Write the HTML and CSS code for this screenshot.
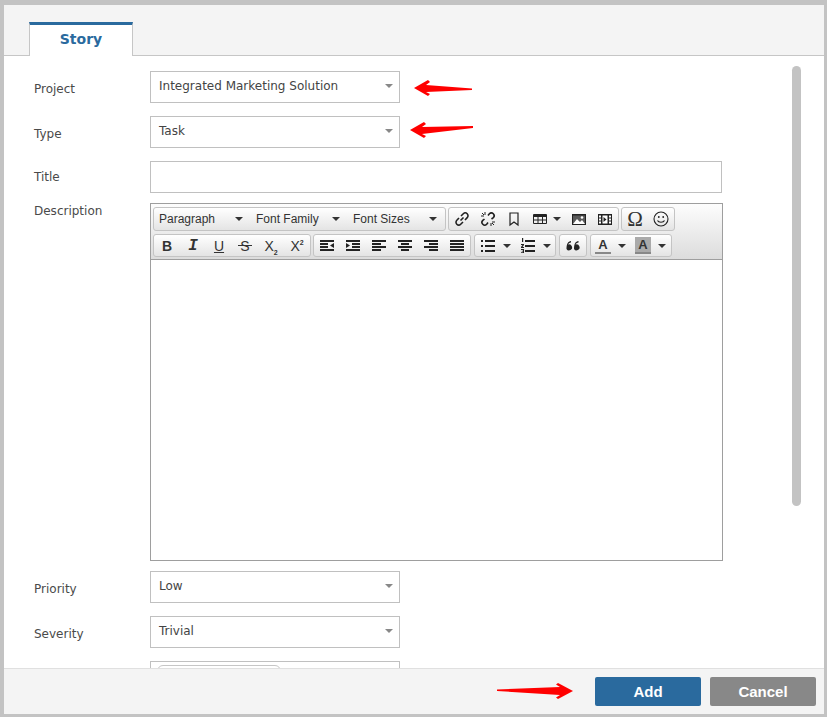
FILE: index.html
```html
<!DOCTYPE html>
<html lang="en">
<head>
<meta charset="utf-8">
<title>Story</title>
<link rel="stylesheet" href="styles.css">
</head>
<body>
<svg class="defs" width="0" height="0" aria-hidden="true">
  <defs>
    <symbol id="caret" viewBox="0 0 8 4"><path d="M0 0h8L4 4z" fill="currentColor"/></symbol>
  </defs>
</svg>
<div class="window">
  <header class="tabbar"><div class="tab">Story</div></header>
  <main class="content">
    <form class="form">
      <div class="row r-select"><label class="lbl">Project</label><div class="select"><span>Integrated Marketing Solution</span><i class="sel-caret"></i></div></div>
      <div class="row r-select"><label class="lbl">Type</label><div class="select"><span>Task</span><i class="sel-caret"></i></div></div>
      <div class="row r-title"><label class="lbl">Title</label><div class="input"></div></div>
      <div class="row r-desc"><label class="lbl">Description</label>
        <div class="editor">
          <div class="toolbar">
            <div class="tb-line">
              <div class="group">
                <div class="menu">Paragraph<svg class="car"><use href="#caret"/></svg></div>
                <div class="menu">Font Family<svg class="car"><use href="#caret"/></svg></div>
                <div class="menu">Font Sizes<svg class="car"><use href="#caret"/></svg></div>
              </div>
              <div class="group">
                <div class="btn"><svg width="16" height="16" viewBox="0 0 16 16" fill="none" stroke="#222" stroke-width="1.6"><path d="M6.500 9.500l3-3"/><path d="M7 5l2.300-2.300a2.300 2.300 0 0 1 3.900 3.900L11 9"/><path d="M5 7L2.800 9.300a2.300 2.300 0 0 0 3.900 3.900L9 11"/></svg></div>
                <div class="btn"><svg width="16" height="16" viewBox="0 0 16 16" fill="none" stroke="#222" stroke-width="1.600"><path d="M8 4.500l1.400-1.800a2.300 2.300 0 0 1 3.900 3.900L11.500 8"/><path d="M4.500 8L2.800 9.400a2.300 2.300 0 0 0 3.900 3.900L8 11.500"/><path stroke-width="1" d="M5 1v3M1 5h3M11 15v-3M15 11h-3M2 2l2 2M14 14l-2-2"/></svg></div>
                <div class="btn"><svg width="16" height="16" viewBox="0 0 16 16" fill="none" stroke="#222" stroke-width="1.200"><path d="M4 2h8v12l-4-3-4 3z"/></svg></div>
                <div class="btn wide w39"><svg width="16" height="16" viewBox="0 0 16 16" fill="none" stroke="#222"><path d="M1.500 3.500h13v9h-13z"/><path d="M1.500 5h13" stroke-width="2"/><path d="M1.500 9h13M6 4v8M10.500 4v8"/></svg><svg class="car"><use href="#caret"/></svg></div>
                <div class="btn"><svg width="16" height="16" viewBox="0 0 16 16"><path d="M1 3h14v11H1z" fill="#222"/><path d="M2 4.500h12v8.500H2z" fill="#fff" opacity=".25"/><path d="M2 13l4-5 3 3 2-2 3 4z" fill="#fff"/><circle cx="11" cy="6.500" r="1.300" fill="#fff"/></svg></div>
                <div class="btn"><svg width="16" height="16" viewBox="0 0 16 16"><path fill="#222" d="M1 3h14v11H1z"/><path fill="#fff" d="M2 4.500h2v2H2zM2 7.500h2v2H2zM2 10.500h2v2H2zM12 4.500h2v2h-2zM12 7.500h2v2h-2zM12 10.500h2v2h-2zM5.500 4.500h5v8h-5z"/><path fill="#222" d="M6.500 6l3 2.500-3 2.500z"/></svg></div>
              </div>
              <div class="group">
                <div class="btn omega">&#937;</div>
                <div class="btn"><svg width="16" height="16" viewBox="0 0 16 16" fill="none" stroke="#222" stroke-width="1.100"><circle cx="8" cy="8" r="7"/><path d="M4.500 9.500c1 2.400 6 2.400 7 0" /><circle cx="5.800" cy="6" r=".9" fill="#222" stroke="none"/><circle cx="10.200" cy="6" r=".9" fill="#222" stroke="none"/></svg></div>
              </div>
            </div>
            <div class="tb-line tb-second">
              <div class="group">
                <div class="btn glyph bold">B</div>
                <div class="btn glyph ital">I</div>
                <div class="btn glyph under">U</div>
                <div class="btn glyph strike">S</div>
                <div class="btn glyph"><span>X<sub>2</sub></span></div>
                <div class="btn glyph"><span>X<sup>2</sup></span></div>
              </div>
              <div class="group">
                <div class="btn"><svg width="16" height="16" viewBox="0 0 16 16" fill="#222"><path d="M1 2h14v2H1zM1 5h8v2H1zM1 8h8v2H1zM1 11h14v2H1zM15 5v5l-4-2.500z"/></svg></div>
                <div class="btn"><svg width="16" height="16" viewBox="0 0 16 16" fill="#222"><path d="M1 2h14v2H1zM7 5h8v2H7zM7 8h8v2H7zM1 11h14v2H1zM1 5v5l4-2.500z"/></svg></div>
                <div class="btn"><svg width="16" height="16" viewBox="0 0 16 16" fill="#222"><path d="M1 2h14v2H1zM1 5h9v2H1zM1 8h14v2H1zM1 11h9v2H1z"/></svg></div>
                <div class="btn"><svg width="16" height="16" viewBox="0 0 16 16" fill="#222"><path d="M1 2h14v2H1zM4 5h8v2H4zM1 8h14v2H1zM4 11h8v2H4z"/></svg></div>
                <div class="btn"><svg width="16" height="16" viewBox="0 0 16 16" fill="#222"><path d="M1 2h14v2H1zM6 5h9v2H6zM1 8h14v2H1zM6 11h9v2H6z"/></svg></div>
                <div class="btn"><svg width="16" height="16" viewBox="0 0 16 16" fill="#222"><path d="M1 2h14v2H1zM1 5h14v2H1zM1 8h14v2H1zM1 11h14v2H1z"/></svg></div>
              </div>
              <div class="group g-gap">
                <div class="btn wide list"><svg width="16" height="16" viewBox="0 0 16 16" fill="#222"><path d="M5 2h10v2H5zM5 7h10v2H5zM5 12h10v2H5zM1 2h2v2H1zM1 7h2v2H1zM1 12h2v2H1z"/></svg><svg class="car"><use href="#caret"/></svg></div>
                <div class="btn wide list"><svg width="16" height="16" viewBox="0 0 16 16" fill="#222"><path d="M5 2h10v2H5zM5 7h10v2H5zM5 12h10v2H5zM2 0h1.200v4H2zM1 6h3v1L2.500 9H4v1H1V9l1.500-2H1zM1 11h3v4H1v-.800h2v-.800H1.800v-.700H3v-.700H1z"/></svg><svg class="car"><use href="#caret"/></svg></div>
              </div>
              <div class="group g-gap">
                <div class="btn"><svg width="16" height="16" viewBox="0 0 16 16" fill="#222"><path d="M1.500 11a3 3 0 1 0 1.600-4.400C3.500 5.400 4.500 4.700 6 4.500V3C3 3.300 1.500 6 1.500 11zM9 11a3 3 0 1 0 1.600-4.400c.4-1.200 1.400-1.900 2.900-2.100V3C10.500 3.300 9 6 9 11z"/></svg></div>
              </div>
              <div class="group g-gap">
                <div class="btn wide colour"><span class="swatch">A</span><svg class="car"><use href="#caret"/></svg></div>
                <div class="btn wide colour"><span class="swatch shade">A</span><svg class="car"><use href="#caret"/></svg></div>
              </div>
            </div>
          </div>
          <div class="edit-area"></div>
        </div>
      </div>
      <div class="row r-select"><label class="lbl">Priority</label><div class="select"><span>Low</span><i class="sel-caret"></i></div></div>
      <div class="row r-select"><label class="lbl">Severity</label><div class="select"><span>Trivial</span><i class="sel-caret"></i></div></div>
      <div class="row"><div class="lbl"></div><div class="tags"><div class="chip"></div></div></div>
    </form>
    <div class="scrollbar"></div>
    <svg class="arrow a1" width="66" height="24" viewBox="0 0 66 24"><path d="M4 12L18 4l2 2-4 3 46 3.500V14l-46 2 4 2-2 2z" fill="#f00"/></svg>
    <svg class="arrow a2" width="70" height="24" viewBox="0 0 70 24"><path d="M4 14l14-8 2 2-4 3 51-1v2L16 18l4 2-2 2z" fill="#f00"/></svg>
  </main>
  <footer class="footer">
    <svg class="arrow-inline" width="78" height="20" viewBox="0 0 78 20"><path d="M1 8.500L64 6l-4-2.500L62 2l15 8-15 8-2-1.500 4-2.500L1 10z" fill="#f00"/></svg>
    <button class="fbtn add" type="button">Add</button>
    <button class="fbtn cancel" type="button">Cancel</button>
  </footer>
</div>
</body>
</html>
```
FILE: styles.css
```css
* { box-sizing: border-box; }
html, body { margin: 0; height: 100%; }
body { background: #c3c3c3; font-family: "DejaVu Sans", Verdana, sans-serif; font-size: 12px; color: #444; overflow: hidden; }
.defs { position: absolute; }
.window { width: 820px; height: 709px; margin: 5px 0 0 4px; background: #fff; display: flex; flex-direction: column; overflow: hidden; }
.tabbar { height: 51px; flex: none; background: #f4f4f4; border-bottom: 1px solid #c6c6c6; padding: 17px 0 0 25px; }
.tab { width: 104px; height: 34px; background: #fff; border: 1px solid #c6c6c6; border-top: 3px solid #2a6a9e; border-bottom: 0; color: #2a6a9e; font-weight: 700; font-size: 14px; text-align: center; line-height: 28px; }
.content { flex: 1; position: relative; overflow: hidden; }
.form { padding: 15px 0 0 30px; }
.row { display: flex; }
.lbl { width: 116px; flex: none; color: #4a4a4a; }
.r-select { height: 32px; margin-bottom: 13px; }
.r-select .lbl { line-height: 36px; }
.r-title { height: 32px; margin-bottom: 10px; }
.r-title .lbl { line-height: 32px; }
.r-desc { margin-bottom: 10px; }
.r-desc .lbl { line-height: 16px; }
.select { width: 250px; height: 32px; border: 1px solid #c0c0c0; position: relative; padding-left: 8px; line-height: 28px; color: #444; }
.sel-caret { position: absolute; right: 6px; top: 12px; border: 4px solid transparent; border-top-color: #888; border-bottom: 0; }
.input { width: 572px; height: 32px; border: 1px solid #c0c0c0; }
.editor { width: 573px; height: 358px; border: 1px solid #9e9e9e; display: flex; flex-direction: column; }
.toolbar { height: 56px; flex: none; background: linear-gradient(#fdfdfd, #dcdcdc); border-bottom: 1px solid #9e9e9e; padding: 2px 0 0 2px; font-family: "Liberation Sans", Arial, sans-serif; color: #333; }
.tb-line { display: flex; height: 27px; gap: 2px; }
.group { display: flex; height: 24px; border: 1px solid #c4c4c4; border-radius: 3px; background: linear-gradient(#fff, #e4e4e4); margin-top: 1px; }
.tb-second .group { height: 23px; }
.g-gap { margin-left: 1px; }
.menu { width: 97px; display: flex; align-items: center; justify-content: space-between; padding: 0 8px 0 5px; font-size: 12px; }
.btn { width: 26px; display: flex; align-items: center; justify-content: center; }
.btn.wide { width: 40px; justify-content: flex-start; padding-left: 5px; gap: 7px; }
.btn.w39 { width: 39px; gap: 5px; }
.btn.colour { padding-left: 4px; }
.car { width: 8px; height: 4px; color: #333; flex: none; }
.omega { font-family: "Liberation Serif", "DejaVu Serif", serif; font-size: 21px; }
.glyph { font-family: "Liberation Sans", Arial, sans-serif; font-size: 14px; color: #333; }
.glyph sub, .glyph sup { font-size: 7px; line-height: 0; font-weight: 700; }
.bold { font-weight: 700; }
.ital { font-style: italic; font-family: "Liberation Mono", monospace; font-weight: 700; font-size: 16px; }
.under { text-decoration: underline; }
.strike { position: relative; }
.strike::after { content: ""; position: absolute; left: 6px; right: 6px; top: 10px; height: 1px; background: #333; }
.swatch { font-weight: 700; font-size: 13px; width: 16px; height: 17px; text-align: center; line-height: 15px; border-bottom: 2px solid #888; }
.swatch.shade { background: #aaa; }
.edit-area { flex: 1; background: #fff; }
.tags { width: 250px; height: 40px; border: 1px solid #c0c0c0; padding: 3px 6px; }
.chip { width: 124px; height: 26px; border: 1px solid #c6c6c6; border-radius: 6px; }
.scrollbar { position: absolute; left: 788px; top: 10px; width: 9px; height: 440px; background: #c3c3c3; border-radius: 5px; }
.arrow { position: absolute; }
.a1 { left: 406px; top: 20px; }
.a2 { left: 402px; top: 60px; }
.footer { height: 46px; flex: none; background: #f4f4f4; border-top: 1px solid #e0e0e0; display: flex; align-items: flex-start; padding: 8px 8px 0 0; justify-content: flex-end; gap: 9px; }
.arrow-inline { margin: 4px 12px 0 0; }
.fbtn { width: 106px; height: 29px; border: 0; border-radius: 2px; color: #fff; font-family: "Liberation Sans", Arial, sans-serif; font-weight: 700; font-size: 15px; padding: 0; }
.add { background: #2a6a9e; }
.cancel { background: #888; }
```
